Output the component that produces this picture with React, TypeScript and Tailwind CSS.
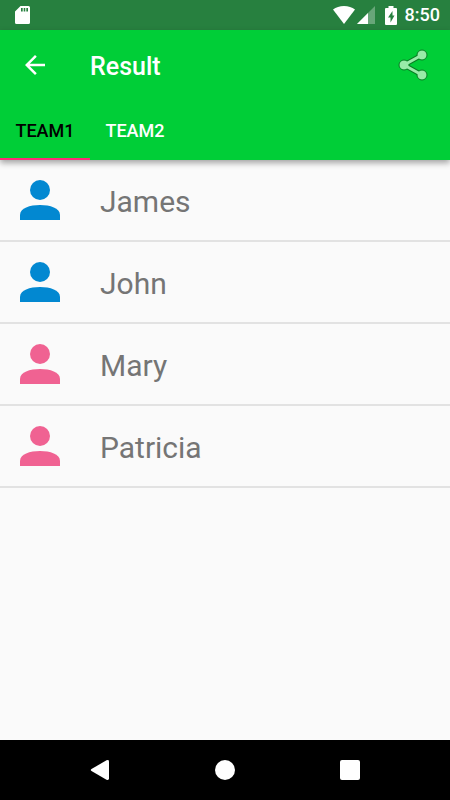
import React, { useState } from "react";

const teams = [
  {
    name: "TEAM1",
    members: [
      { name: "James", color: "text-[#0288d1]" },
      { name: "John", color: "text-[#0288d1]" },
      { name: "Mary", color: "text-[#f06292]" },
      { name: "Patricia", color: "text-[#f06292]" },
    ],
  },
  { name: "TEAM2", members: [] },
];

const StatusBar = () => (
  <div className="flex h-[30px] items-center justify-between bg-[#27803f] pl-[15px] pr-[10px] text-white">
    <svg viewBox="0 0 15 18" className="h-[18px] w-[15px]" fill="currentColor">
      <path
        fillRule="evenodd"
        d="M5.5 0H13.5A1.5 1.5 0 0 1 15 1.500V16.500A1.500 1.500 0 0 1 13.500 18H1.500A1.500 1.500 0 0 1 0 16.500V5.500ZM6 2V5.500H7.700V2ZM8.700 2V5.500H10.300V2ZM11.300 2V5.500H13V2Z"
      />
    </svg>
    <div className="flex items-center">
      <svg viewBox="0 0 22 18" className="h-[18px] w-[22px]" fill="currentColor">
        <path d="M11 18L0 3.500C3 1.300 6.700 0 11 0S19 1.300 22 3.500Z" />
      </svg>
      <svg viewBox="0 0 18 18" className="ml-[2px] h-[18px] w-[18px]" fill="currentColor">
        <path d="M0 18L18 0V18Z" opacity=".3" />
        <path d="M0 18L11 7V18Z" />
      </svg>
      <svg viewBox="0 0 12 19" className="ml-[10px] h-[19px] w-[12px]" fill="currentColor">
        <path
          fillRule="evenodd"
          d="M3.500 0H8.500V2H11A1 1 0 0 1 12 3V18A1 1 0 0 1 11 19H1A1 1 0 0 1 0 18V3A1 1 0 0 1 1 2H3.500ZM7.500 5L3 11.500H5.500V16.500L9.500 9.500H7.500Z"
        />
      </svg>
      <span className="ml-2 text-lg leading-5 font-medium">8:50</span>
    </div>
  </div>
);

const BackArrow = () => (
  <svg viewBox="0 0 24 24" className="h-[30px] w-[30px]" fill="currentColor">
    <path d="M20 11H7.830l5.590-5.590L12 4l-8 8 8 8 1.410-1.410L7.830 13H20v-2z" />
  </svg>
);

const ShareIcon = () => (
  <svg viewBox="0 0 30 32" className="h-8 w-[30px]">
    <path d="M24 6L6 16L24 26" fill="none" stroke="#087d24" strokeWidth="5" />
    <g fill="#99eba9" stroke="#087d24" strokeWidth="1">
      <circle cx="24" cy="6" r="5" />
      <circle cx="6" cy="16" r="5" />
      <circle cx="24" cy="26" r="5" />
    </g>
    <path d="M24 6L6 16L24 26" fill="none" stroke="#99eba9" strokeWidth="3" />
  </svg>
);

const PersonIcon = () => (
  <svg viewBox="0 0 40 40" className="h-10 w-10" fill="currentColor">
    <circle cx="20" cy="10" r="10" />
    <path d="M20 25C10 25 0 28 0 35V40H40V35C40 28 30 25 20 25Z" />
  </svg>
);

const NavigationBar = () => (
  <nav className="grid h-[60px] grid-cols-3 bg-black px-[38px] text-white">
    <button aria-label="Back" className="flex items-center justify-center">
      <svg viewBox="0 0 20 20" className="h-5 w-5" fill="currentColor">
        <path d="M1.500 9L16.500 .3Q19 -.5 19 1.500V18.500Q19 20.500 16.500 19.700L1.500 11Q0 10 1.500 9Z" />
      </svg>
    </button>
    <button aria-label="Home" className="flex items-center justify-center">
      <span className="h-5 w-5 rounded-full bg-white" />
    </button>
    <button aria-label="Recent apps" className="flex items-center justify-center">
      <span className="h-5 w-5 rounded-xs bg-white" />
    </button>
  </nav>
);

const App = () => {
  const [current, setCurrent] = useState(0);

  return (
    <div className="flex min-h-screen flex-col bg-[#fafafa] font-[Roboto,sans-serif]">
      <StatusBar />
      <header className="bg-[#00ce37] text-white shadow-[0_3px_6px_rgba(0,0,0,0.35)]">
        <div className="flex h-[70px] items-center pl-5 pr-[22px]">
          <button aria-label="Go back">
            <BackArrow />
          </button>
          <h1 className="ml-10 flex-1 pt-1 text-[25px] leading-8 font-medium">
            Result
          </h1>
          <button aria-label="Share">
            <ShareIcon />
          </button>
        </div>
        <div role="tablist" className="flex h-[60px]">
          {teams.map((team, index) => (
            <button
              key={team.name}
              role="tab"
              aria-selected={index === current}
              onClick={() => setCurrent(index)}
              className={`w-[90px] border-b-2 pt-1 text-lg font-medium ${
                index === current
                  ? "border-[#ff2a78] text-black"
                  : "border-transparent text-white"
              }`}
            >
              {team.name}
            </button>
          ))}
        </div>
      </header>
      <main className="flex-1">
        <ul>
          {teams[current].members.map((member) => (
            <li
              key={member.name}
              className="flex h-[82px] items-center border-b-2 border-[#e2e2e2] px-5"
            >
              <span className={member.color}>
                <PersonIcon />
              </span>
              <span className="ml-10 pt-1 text-3xl text-[#757575]">
                {member.name}
              </span>
            </li>
          ))}
        </ul>
      </main>
      <NavigationBar />
    </div>
  );
};

export default App;
